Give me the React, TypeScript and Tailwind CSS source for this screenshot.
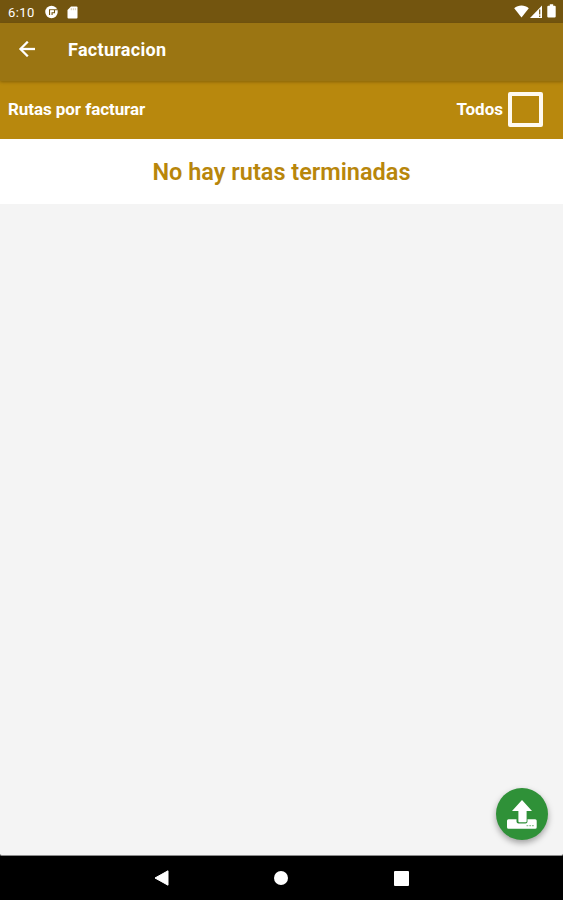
import type { ReactNode } from 'react';

function StatusBar() {
  return (
    <div className="flex h-[23px] shrink-0 items-center bg-[#73550f] pl-2 pr-[7px] text-white">
      <span className="w-[37px] pt-px text-[13px] leading-none tracking-[0.4px]">6:10</span>
      <svg className="mt-px h-[14px] w-[13px]" viewBox="0 0 14 14">
        <circle cx="7" cy="7" r="6.7" fill="#fff" />
        <path d="M4.9 10.2V4.6H13.6M10.2 4.6V7.8H7.6V10.2" fill="none" stroke="#73550f" strokeWidth="1.2" />
        <path d="M5.8 5.4H9.4V7H5.8Z" fill="#fff" />
      </svg>
      <svg className="ml-[9px] mt-px h-[13px] w-[11px]" viewBox="0 0 11 13">
        <path d="M4 .5H9.5Q10.5 .5 10.5 1.5V11.5Q10.5 12.5 9.5 12.5H1.5Q.5 12.5 .5 11.5V4Z" fill="#fff" />
        <path d="M4.3 2.2V4.2M6.3 2.2V4.2M8.3 2.2V4.2" stroke="#c4b48c" strokeWidth=".7" />
      </svg>
      <div className="ml-auto flex items-center pb-px">
        <svg className="h-[13px] w-[15px]" viewBox="0 0 15 13">
          <path d="M7.5 12.6L.2 3.3C4.3-.4 10.7-.4 14.8 3.3Z" fill="#fff" />
        </svg>
        <svg className="ml-[1px] h-[13px] w-[12px]" viewBox="0 0 12 13">
          <path d="M0 13L12 .5V13Z" fill="#fff" />
          <path d="M9.7 4.5V9.5M9.7 10.6V12" stroke="#73550f" strokeWidth="1.2" />
        </svg>
        <svg className="ml-[5px] h-[14px] w-[9px]" viewBox="0 0 9 14">
          <path d="M2.8 .3H6.2V1.7H7.6Q8.7 1.7 8.7 2.8V12.4Q8.7 13.5 7.6 13.5H1.4Q.3 13.5 .3 12.4V2.8Q.3 1.7 1.4 1.7H2.8Z" fill="#fff" />
        </svg>
      </div>
    </div>
  );
}

function AppBar({ title }: { title: string }) {
  return (
    <header className="relative z-10 flex h-[58px] shrink-0 items-center bg-[#9b7512] pb-[6px] pl-[19px] text-white shadow-[0_1px_3px_rgba(70,50,0,0.45)]">
      <button aria-label="Volver" className="h-4 w-4">
        <svg className="h-4 w-4" viewBox="4 4 16 16" fill="#fff" stroke="#fff" strokeWidth=".3">
          <path d="M20 11H7.83l5.59-5.59L12 4l-8 8 8 8 1.41-1.41L7.83 13H20v-2z" />
        </svg>
      </button>
      <h1 className="ml-[33px] pt-px text-[18px] font-bold leading-6 tracking-[0.3px]">{title}</h1>
    </header>
  );
}

function RoutesHeader() {
  return (
    <div className="flex h-[58px] shrink-0 items-center bg-[#b8880d] pb-[2px] pl-2 pr-5 text-white">
      <span className="text-[17px] font-bold leading-6 tracking-[-0.07px]">Rutas por facturar</span>
      <label className="ml-auto flex items-center">
        <span className="text-[17px] font-bold leading-6">Todos</span>
        <span className="ml-[5px] h-[35px] w-[35px] rounded-[2px] border-4 border-[#fffaf0]" />
      </label>
    </div>
  );
}

function EmptyMessage({ children }: { children: ReactNode }) {
  return (
    <div className="flex h-[65px] shrink-0 items-center justify-center bg-white pt-px">
      <p className="text-[23.5px] font-semibold leading-7 text-[#b8860b]">{children}</p>
    </div>
  );
}

function UploadButton() {
  return (
    <button
      aria-label="Subir"
      className="absolute bottom-[15px] right-[15px] h-[52px] w-[52px] rounded-full bg-[#2f9138] shadow-[0_3px_6px_rgba(0,0,0,0.35)]"
    >
      <svg className="h-[52px] w-[52px]" viewBox="0 0 52 52" fill="#fff">
        <path d="M12.5 31.2H20.5V33.4Q20.5 35.4 22.5 35.4H29.5Q31.5 35.4 31.5 33.4V31.2H39.2Q40.7 31.2 40.7 32.7V39.3Q40.7 40.8 39.2 40.8H12.5Q11 40.8 11 39.3V32.7Q11 31.2 12.5 31.2Z" />
        <path d="M26 12L36 23H30.6V33.2Q30.6 34.2 29.6 34.2H23.4Q22.4 34.2 22.4 33.2V23H16Z" />
        <path d="M30.5 37.6H32.3M33.3 37.6H35.1M36 37.6H37.8" stroke="#8fc493" strokeWidth="1.2" />
      </svg>
    </button>
  );
}

function NavigationBar() {
  return (
    <nav className="flex h-[44px] shrink-0 items-center bg-black pl-[154px]">
      <svg className="h-[16px] w-[15px]" viewBox="0 0 15 16">
        <path d="M14 .8V15.2L1 8Z" fill="#fff" stroke="#fff" strokeWidth="1" strokeLinejoin="round" />
      </svg>
      <span className="ml-[105px] h-[14px] w-[14px] rounded-full bg-white" />
      <span className="ml-[106px] h-[15px] w-[15px] rounded-[1px] bg-white" />
    </nav>
  );
}

export default function App() {
  return (
    <div className="flex h-[900px] w-[563px] flex-col overflow-hidden bg-black font-[Roboto,sans-serif]">
      <StatusBar />
      <AppBar title="Facturacion" />
      <RoutesHeader />
      <EmptyMessage>No hay rutas terminadas</EmptyMessage>
      <main className="relative flex-1 rounded-b-[2px] border-b border-[#8b8b8b] bg-[#f4f4f4]">
        <UploadButton />
      </main>
      <NavigationBar />
    </div>
  );
}
